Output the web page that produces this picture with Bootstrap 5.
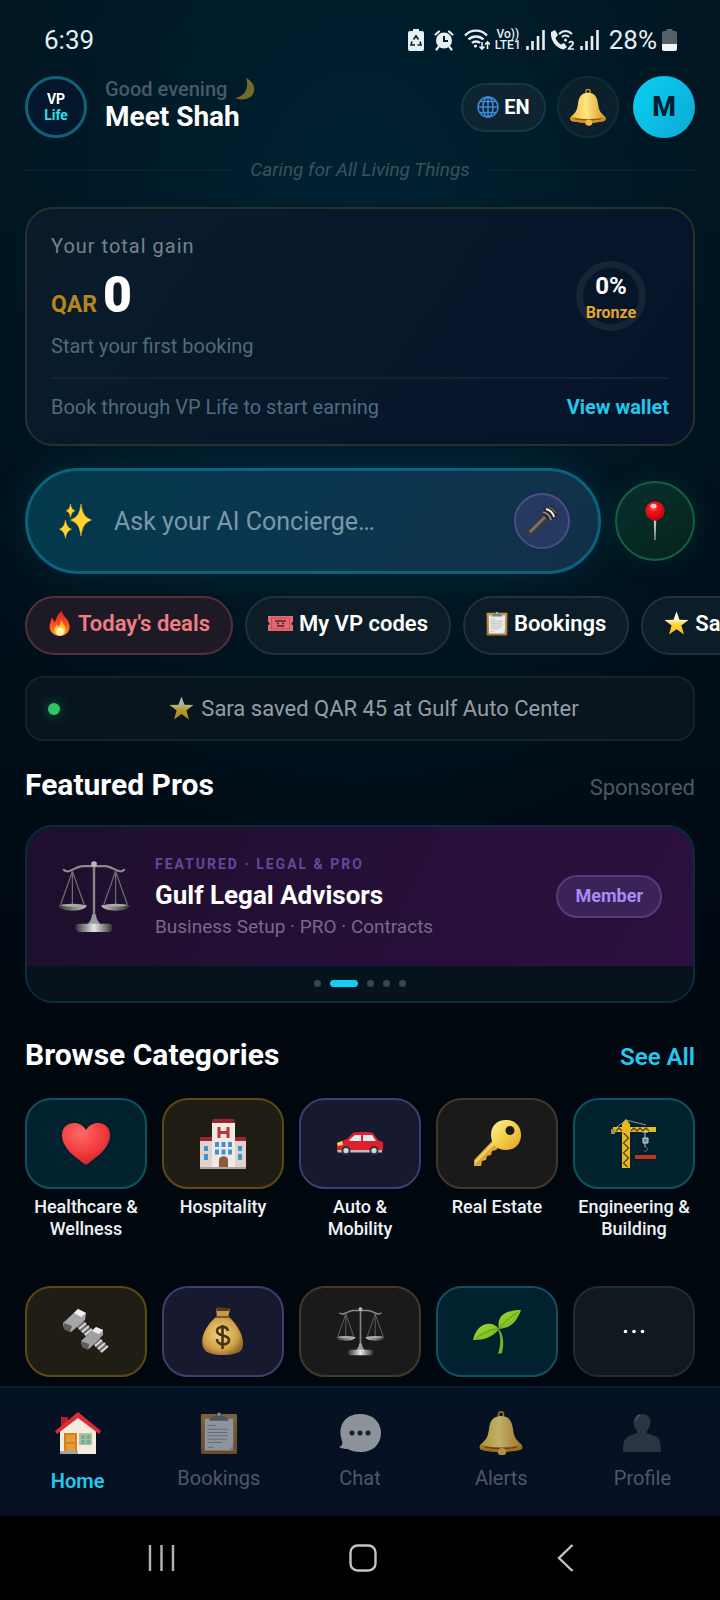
<!DOCTYPE html>
<html lang="en">
<head>
<meta charset="utf-8">
<meta name="viewport" content="width=device-width, initial-scale=1">
<title>VP Life</title>
<link rel="stylesheet" href="https://cdn.jsdelivr.net/npm/bootstrap@5.3.0/dist/css/bootstrap.min.css">
<style>
  :root { --cy: #22c8ee; }
  body {
    font-family: Roboto, "Noto Sans", sans-serif; color: #fff; font-size: 20px; line-height: 26px;
    background: radial-gradient(ellipse 62% 40% at 50% 15%, rgba(0,48,72,.5), rgba(0,30,46,0) 100%),
      linear-gradient(180deg, #00141f 0, #00101a 38%, #01070f 66%, #01070f 100%);
    overflow-x: hidden;
  }
  a { text-decoration: none; color: inherit; }
  button { color: inherit; padding: 0; }
  svg { flex: none; display: block; }
  .gutter { padding-left: 25px; padding-right: 25px; }
  .statusbar { height: 76px; padding: 4px 43px 0 44px; font-size: 26px; line-height: 30px; color: #e6eef2; }
  .g10 { gap: 10px; }
  .g5 { gap: 5px; }
  .g7 { gap: 7px; }
  .volte { font-size: 12px; line-height: 11px; font-weight: 500; }
  .round { width: 62px; height: 62px; border-radius: 50%; }
  .brand { border: 3px solid #12617b; background: #04162c; font-size: 14px; line-height: 16px; font-weight: 700; }
  .brand span:last-child { color: #28dfe9; }
  .greetbox { margin-left: 18px; }
  .greet { font-weight: 500; font-size: 20px; color: #475a66; gap: 8px; }
  .who { font-weight: 700; font-size: 28px; line-height: 29px; }
  .lang { width: 85px; height: 49px; border-radius: 25px; border: 2px solid #12394a; background: #0e2431; font-size: 20px; font-weight: 700; gap: 5px; }
  .bellbtn { margin: 0 14px 0 11px; border: 2px solid #102c37; background: #0c202b; }
  .avatar { background: linear-gradient(125deg, #08d1f3, #10a8d3); font-weight: 800; font-size: 27px; color: #03202f; border: 0; }
  .tagline { margin-top: 20px; gap: 17px; font-style: italic; font-size: 19px; line-height: 24px; color: #3d515c; }
  .tagline i { height: 2px; background: #06222f; }
  .gain { margin-top: 25px; padding: 24px; border: 2px solid #293029; border-radius: 28px; background: linear-gradient(125deg, #0a1c2a, #06132a); }
  .gain .lead1 { letter-spacing: 1px; font-size: 20px; color: #74838f; }
  .amount { height: 54px; margin: 9px 0 11px; display: flex; align-items: baseline; gap: 6px; font-size: 50px; line-height: 54px; font-weight: 900; }
  .amount small { font-size: 23px; line-height: 26px; font-weight: 700; color: #b48718; }
  .mutedblue { color: #4f6c7d; }
  .gainfoot { margin-top: 18px; padding-top: 15px; border-top: 2px solid #13232f; }
  .cyan { color: var(--cy); }
  .ring { width: 70px; margin-right: 23px; }
  .ring div { padding-top: 6px; }
  .ring b { font-size: 24px; line-height: 28px; }
  .ring em { font-style: normal; font-weight: 700; font-size: 16px; color: #e2a52a; }
  .askrow { gap: 14px; margin-top: 22px; }
  .ask { height: 106px; border-radius: 53px; border: 3px solid #0b627d; padding: 0 28px 0 31px; background: linear-gradient(120deg, #03394a 0, #0a3650 45%, #123048 100%); box-shadow: 0 0 36px rgba(0,110,140,.22); }
  .ask input { margin-left: 21px; background: none; border: 0; outline: 0; color: #dfe9ef; font-size: 25px; min-width: 0; padding: 2px 0 0; }
  .ask input::placeholder { color: #7b98a8; opacity: 1; }
  .mic { width: 56px; height: 56px; border-radius: 50%; border: 2px solid #4b4d88; background: #263a61; }
  .pin { width: 80px; height: 80px; border-radius: 50%; border: 2px solid #14613f; background: linear-gradient(150deg, #07302a, #06231f); box-shadow: 0 0 24px rgba(0,90,80,.25); }
  .chips { gap: 12px; overflow: hidden; margin-top: 22px; padding-left: 25px; }
  .chip { height: 59px; flex: none; border-radius: 30px; border: 2px solid #22313b; background: #0d1d27; padding: 0 21px 4px; gap: 6px; font-weight: 600; font-size: 22px; white-space: nowrap; }
  .chip.hot { border-color: #54303a; background: #1e1a25; color: #f07f85; }
  .ticker { margin-top: 21px; height: 65px; border: 2px solid #14222b; border-radius: 18px; background: #08151f; padding: 0 5px 0 21px; font-size: 22px; color: #949ea5; }
  .live { width: 12px; height: 12px; border-radius: 50%; background: #2cc765; box-shadow: 0 0 12px rgba(34,197,94,.5); }
  h2 { font-size: 30px; line-height: 34px; font-weight: 700; margin: 0; }
  .sect { margin-top: 27px; }
  .sect2 { margin-top: 35px; }
  .sponsor { font-size: 22px; color: #4d5860; }
  .seeall { font-size: 24px; font-weight: 600; }
  .promo { margin-top: 23px; border: 2px solid #0a2d39; border-radius: 28px; overflow: hidden; background: #06131d; }
  .slide { height: 139px; background: linear-gradient(115deg, #1d0f2d, #2d1041); padding: 0 31px; }
  .slidetext { margin-left: 25px; }
  .eyebrow { font-size: 14px; line-height: 20px; font-weight: 700; letter-spacing: 2px; color: #64479a; }
  .slide h3 { font-size: 26px; line-height: 34px; font-weight: 700; margin: 4px 0 2px; }
  .slide p { font-size: 19px; line-height: 26px; color: #79698a; margin: 0; }
  .member { height: 43px; border-radius: 22px; border: 2px solid #573b79; background: #3b2257; color: #a98bf5; font-weight: 700; font-size: 18px; padding: 0 17px 2px; }
  .dots { height: 35px; gap: 9px; }
  .dots i { width: 7px; height: 7px; border-radius: 4px; background: #364550; }
  .dots .on { width: 28px; background: #12cdf6; }
  .cats { display: grid; grid-template-columns: repeat(5, 1fr); gap: 46px 15px; margin-top: 26px; }
  .cats a { text-align: center; font-size: 18px; line-height: 22px; font-weight: 500; color: #f0f3f5; }
  .tile { height: 91px; border-radius: 26px; border: 2px solid; margin-bottom: 7px; display: flex; align-items: center; justify-content: center; }
  .t-cy { background: #02212f; border-color: #0c5361; }
  .t-go { background: #201e14; border-color: #5c4a10; }
  .t-pu { background: #171a2f; border-color: #3f3d6d; }
  .t-br { background: #1a1a1a; border-color: #453729; }
  .t-gy { background: #111820; border-color: #222a32; }
  .tabs { margin-top: 1px; height: 130px; border-top: 2px solid #04202f; background: linear-gradient(180deg, #051223, #061023); padding: 23px 7px 0; }
  .tabs a { flex: 1 1 0; display: flex; flex-direction: column; align-items: center; gap: 11px; font-size: 20px; line-height: 24px; color: #4b586a; }
  .tabs .on { color: var(--cy); font-weight: 600; gap: 14px; }
  .tabs .dim { opacity: .6; }
  .sys { height: 84px; background: #000; padding: 0 54px 0 60px; }
  .sys button { flex: 1 1 0; display: flex; justify-content: center; }
</style>
</head>
<body>
<svg width="0" height="0" class="position-absolute" aria-hidden="true">
  <defs>
    <linearGradient id="gGold" x1="0" x2="1"><stop offset="0" stop-color="#eeb93b"/><stop offset=".45" stop-color="#ffe680"/><stop offset="1" stop-color="#d9942a"/></linearGradient>
    <linearGradient id="gKey" x1="0" y1="0" x2="1" y2="1"><stop offset="0" stop-color="#fff0a0"/><stop offset=".5" stop-color="#f5cf47"/><stop offset="1" stop-color="#dba029"/></linearGradient>
    <linearGradient id="gStar" x1="0" y1="0" x2="0" y2="1"><stop offset="0" stop-color="#fff"/><stop offset=".4" stop-color="#fff0b8"/><stop offset=".55" stop-color="#fdd835"/><stop offset="1" stop-color="#f9b825"/></linearGradient>
    <linearGradient id="gFire" x1="0" y1="0" x2="0" y2="1"><stop offset="0" stop-color="#c8261c"/><stop offset=".5" stop-color="#ff4b1f"/><stop offset="1" stop-color="#ff9c2b"/></linearGradient>
    <radialGradient id="gHeart" cx=".4" cy=".25" r=".8"><stop offset="0" stop-color="#ff6a66"/><stop offset=".6" stop-color="#f23a3c"/><stop offset="1" stop-color="#c3222b"/></radialGradient>
    <radialGradient id="gRed" cx=".42" cy=".3" r=".7"><stop offset="0" stop-color="#ff8a80"/><stop offset=".35" stop-color="#f5121c"/><stop offset="1" stop-color="#b80410"/></radialGradient>
    <radialGradient id="gBag" cx=".45" cy=".45" r=".6"><stop offset="0" stop-color="#f3d883"/><stop offset=".7" stop-color="#cfa048"/><stop offset="1" stop-color="#94672a"/></radialGradient>
    <linearGradient id="gLeaf" x1="0" y1="0" x2="1" y2="1"><stop offset="0" stop-color="#b5ec3c"/><stop offset="1" stop-color="#5ba614"/></linearGradient>
    <linearGradient id="gMetal" x1="0" x2="1"><stop offset="0" stop-color="#333"/><stop offset=".5" stop-color="#e6e6e6"/><stop offset="1" stop-color="#333"/></linearGradient>
    <linearGradient id="gBoard" x1="0" y1="0" x2="0" y2="1"><stop offset="0" stop-color="#c99848"/><stop offset="1" stop-color="#a8752f"/></linearGradient>

    <symbol id="bell" viewBox="0 0 48 48"><circle cx="24" cy="5.500" r="2.600" fill="none" stroke="#c88a24" stroke-width="1.600"/><circle cx="25" cy="42" r="4.500" fill="#dfa233"/><path d="M24 7c8 0 11 5 12 13 1 8 3 11 8 15 2 2 2 5-1 6-10 2-28 2-38 0-3-1-3-4-1-6 5-4 7-7 8-15 1-8 4-13 12-13z" fill="url(#gGold)"/><path d="M4.500 36c11 3 28 3 39 0l1.500 3c-3 3-12 4-21 4S6 42 3 39z" fill="#d08e25"/><path d="M8 38c9 2 23 2 32 0" fill="none" stroke="#7c4a12" stroke-width="1.200"/><ellipse cx="25" cy="42.500" rx="4" ry="3.500" fill="#f0ba4c"/></symbol>

    <symbol id="clip" viewBox="0 0 40 46"><rect x="1" y="3" width="38" height="42" rx="1.500" fill="url(#gBoard)"/><path d="M5 8h30v33.500H5z" fill="#e9ecee"/><path d="M30 41.500l5-6v6z" fill="#b9bfc4"/><path d="M10 10c0-3 4-5 7-5 0-5 6-5 6 0 3 0 7 2 7 5z" fill="#7c8287"/><circle cx="20" cy="3.500" r="1.500" fill="#dde1e4"/><path d="M8 15h9M8 19h22M8 22.500h21M8 26h22M8 29.500h20M8 33h15M8 38h6" stroke="#a3a9af" stroke-width="1.100"/></symbol>

    <symbol id="star" viewBox="0 0 24 24"><path d="M12 .5l2.900 8 8.600.200-6.800 5.300 2.500 8.500L12 17.400 4.800 22.500 7.300 14 .5 8.700l8.600-.2z" fill="url(#gStar)"/></symbol>

    <symbol id="scales" viewBox="0 0 70 70"><path d="M5 8c5 6 12-3 19-3h22c7 0 14 9 19 3" fill="none" stroke="#8c8c8c" stroke-width="2"/><path d="M35 4v50" stroke="#858585" stroke-width="2.400"/><circle cx="35" cy="3" r="2.800" fill="#bbb"/><path d="M14 10L2 44M14 10v32M14 10l12 34M56 10L44 44M56 10v32M56 10l12 34" stroke="#6d6d6d" stroke-width="1.200"/><path d="M0 43h28c-1 7-27 7-28 0zM42 43h28c-1 7-27 7-28 0z" fill="url(#gMetal)"/><ellipse cx="14" cy="43" rx="11" ry="1.500" fill="#aaa"/><ellipse cx="56" cy="43" rx="11" ry="1.500" fill="#aaa"/><path d="M33 52h4c0 4 2 7 5 10H28c3-3 5-6 5-10z" fill="#999"/><rect x="17" y="61" width="36" height="8" rx="4" fill="url(#gMetal)"/></symbol>
  </defs>
</svg>

<div class="min-vh-100 d-flex flex-column">
  <div class="statusbar d-flex align-items-center justify-content-between">
    <span>6:39</span>
    <div class="d-flex align-items-center g10">
      <svg width="16" height="22" viewBox="0 0 16 22"><path d="M5 0h6v2h3a2 2 0 0 1 2 2v16a2 2 0 0 1-2 2H2a2 2 0 0 1-2-2V4a2 2 0 0 1 2-2h3z" fill="#e8eff2"/><path d="M5.500 10.500L8 7l2.500 3.500M12 12.500l1 3.500H9.500M4 12.500L3 16h4" fill="none" stroke="#08202d" stroke-width="1.600"/></svg>
      <svg width="20" height="22" viewBox="0 0 20 22"><circle cx="10" cy="11.500" r="8" fill="#e8eff2"/><path d="M4.500 18L2.500 20.500M15.500 18l2 2.500M1.500 5.500L5 2.500M18.500 5.500L15 2.500" stroke="#e8eff2" stroke-width="2.200" stroke-linecap="round"/><path d="M10 7v5h4" fill="none" stroke="#08202d" stroke-width="2"/></svg>
      <div class="d-flex align-items-center g5">
        <svg width="26" height="22" viewBox="0 0 26 22"><path d="M1 6.500c6-6.500 16-6.500 22 0M4.500 10.500c4-4 11-4 15 0M8 14c2-2 6-2 8 0" fill="none" stroke="#e8eff2" stroke-width="2.400"/><circle cx="11.500" cy="17" r="1.600" fill="#e8eff2"/><path d="M18 13v7m-2.500-2.500L18 20l2.500-2.500M23.500 20v-7M21 15.500l2.500-2.500 2.500 2.500" fill="none" stroke="#e8eff2" stroke-width="1.600"/></svg>
        <div class="volte text-center">Vo))<br>LTE1</div>
        <svg width="19" height="20" viewBox="0 0 19 20"><path d="M1.500 16v4M6.500 11v9M12 6v14M17.500 0v20" stroke="#e8eff2" stroke-width="2.600"/></svg>
        <svg width="25" height="22" viewBox="0 0 25 22"><path d="M1 3l4-2 3 5-2.500 3c1 3 3 5 5.500 6.500l3-1.500 3 4-3 2.500C7 20 0 12 1 3z" fill="#e8eff2"/><path d="M9 5c4-4 9-4 13 0M12 8c2-2 5-2 7 0" fill="none" stroke="#e8eff2" stroke-width="2"/><circle cx="15.500" cy="11" r="1.500" fill="#e8eff2"/><path d="M19 14c1-2.500 5-1.500 4 1-.500 1.500-4 3.500-4.500 5H24" fill="none" stroke="#e8eff2" stroke-width="1.700"/></svg>
        <svg width="19" height="20" viewBox="0 0 19 20"><path d="M1.500 16v4M6.500 11v9M12 6v14M17.500 0v20" stroke="#e8eff2" stroke-width="2.600"/></svg>
      </div>
      <div class="d-flex align-items-center g5"><span>28%</span>
        <svg width="15" height="22" viewBox="0 0 15 22"><path d="M4.500 0h6v2H13a2 2 0 0 1 2 2v11H0V4a2 2 0 0 1 2-2h2.500z" fill="#566069"/><path d="M0 15h15v5a2 2 0 0 1-2 2H2a2 2 0 0 1-2-2z" fill="#f3f6f7"/></svg></div>
    </div>
  </div>

  <header class="gutter d-flex align-items-start">
    <div class="round brand d-flex flex-column align-items-center justify-content-center"><span>VP</span><span>Life</span></div>
    <div class="greetbox flex-grow-1">
      <div class="greet d-flex align-items-center">Good evening
        <svg width="20" height="22" viewBox="0 0 20 22"><path d="M11 0c11 5 11 18 0 21-5 1-9 0-11-1 8-1 15-8 11-20z" fill="#72692b"/></svg></div>
      <div class="who">Meet Shah</div>
    </div>
    <div class="d-flex align-items-center">
      <button class="lang d-flex align-items-center justify-content-center">
        <svg width="22" height="22" viewBox="0 0 22 22" fill="none" stroke="#3d8bd6" stroke-width="1.500"><circle cx="11" cy="11" r="10"/><ellipse cx="11" cy="11" rx="5" ry="10"/><path d="M11 1v20M1 11h20M3 5.500h16M3 16.500h16"/></svg>EN</button>
      <button class="round bellbtn d-flex align-items-center justify-content-center" aria-label="Notifications"><svg width="40" height="40"><use href="#bell"/></svg></button>
      <button class="round avatar">M</button>
    </div>
  </header>

  <div class="gutter"><div class="tagline d-flex align-items-center"><i class="flex-grow-1"></i><span>Caring for All Living Things</span><i class="flex-grow-1"></i></div></div>

  <main class="flex-grow-1">
    <section class="gutter">
      <div class="gain">
        <div class="d-flex align-items-center justify-content-between">
          <div>
            <div class="lead1">Your total gain</div>
            <div class="amount"><small>QAR</small><span>0</span></div>
            <div class="mutedblue">Start your first booking</div>
          </div>
          <div class="ring position-relative">
            <svg width="70" height="70" viewBox="0 0 70 70"><circle cx="35" cy="35" r="31.500" fill="none" stroke="#162436" stroke-width="7"/></svg>
            <div class="position-absolute top-0 start-50 translate-middle-x h-100 d-flex flex-column align-items-center justify-content-center"><b>0%</b><em>Bronze</em></div>
          </div>
        </div>
        <div class="gainfoot d-flex justify-content-between"><span class="mutedblue">Book through VP Life to start earning</span><a href="#" class="cyan fw-bold">View wallet</a></div>
      </div>

      <div class="askrow d-flex align-items-center">
        <div class="ask flex-grow-1 d-flex align-items-center">
          <svg width="34" height="36" viewBox="0 0 34 36" fill="#fdd42e" stroke="#f6b921" stroke-width=".5"><path d="M22 1c1.500 9 3 13 10.500 16C25 20 23.500 24 22 33c-1.500-9-3-13-10.500-16C19 14 20.500 10 22 1zM11.500 1c.8 4 1.500 5.500 4.500 6.800-3 1.200-3.700 2.700-4.500 6.700-.8-4-1.500-5.500-4.500-6.700 3-1.300 3.700-2.800 4.500-6.800zM6.500 17c1 5 2 7.500 6 9.200-4 1.600-5 4.100-6 9.100-1-5-2-7.500-6-9.100 4-1.700 5-4.200 6-9.200z"/></svg>
          <input type="text" class="flex-grow-1" placeholder="Ask your AI Concierge…" aria-label="Ask your AI Concierge">
          <button class="mic d-flex align-items-center justify-content-center" aria-label="Speak">
            <svg width="32" height="32" viewBox="0 0 32 32"><path d="M1 26L17 9l7 6L5 31c-3 1-6-3-4-5z" fill="#3d3b39"/><path d="M3 26L18 11l2 2L5 28z" fill="#77736e"/><path d="M17 9c-1-4 3-8 8-8 4 0 7 4 6 8s-5 6-8 6z" fill="#25262a"/><path d="M17 7c4 1 7 4 8 8" fill="none" stroke="#9c9a96" stroke-width="1.600"/><path d="M20 4c4 1 7 4 8 8" fill="none" stroke="#f1eee8" stroke-width="2"/><path d="M23 2c3 1 6 4 7 6" fill="none" stroke="#6f7078" stroke-width="1.200"/></svg></button>
        </div>
        <button class="pin d-flex align-items-center justify-content-center" aria-label="Location"><svg width="20" height="40" viewBox="0 0 20 40"><path d="M8.700 18h2.600l-.8 21h-1z" fill="#b9bec0"/><circle cx="10" cy="10" r="9.700" fill="url(#gRed)"/><ellipse cx="8.500" cy="5" rx="3" ry="2" fill="#ffd0ca"/></svg></button>
      </div>
    </section>

    <nav class="chips d-flex" aria-label="Shortcuts">
      <button class="chip hot d-flex align-items-center"><svg width="24" height="25" viewBox="0 0 24 26"><path d="M14 0c1 5 4 6 6 10 5 8 0 16-8 16S-1 19 2 12c.500-1.500 1-3 1-5 2 1 3 3 3 5C9 9 8 3 14 0z" fill="url(#gFire)"/><path d="M13 9c1 4 5 5 5 10 0 4-3 6.500-6 6.500S5.500 23 6 19c.3-2.500 2-3 2.500-5 1 .5 1.500 1.500 1.500 3 2-2 3-4 3-8z" fill="#ffc83d"/><ellipse cx="12" cy="21.500" rx="4" ry="4" fill="#fff3b0"/></svg>Today's deals</button>
      <button class="chip d-flex align-items-center"><svg width="25" height="15" viewBox="0 0 25 15"><path d="M0 0h25v6a1.500 1.500 0 0 0 0 3v6H0V9a1.500 1.500 0 0 0 0-3z" fill="#e36a73"/><rect x="3.500" y="2" width="18" height="11" fill="none" stroke="#c84d59"/><path d="M7 5h11M9 7.500h2m3 0h2M9 10h7" stroke="#51232d" stroke-width="1.500"/></svg>My VP codes</button>
      <button class="chip d-flex align-items-center"><svg width="22" height="25"><use href="#clip"/></svg>Bookings</button>
      <button class="chip d-flex align-items-center"><svg width="25" height="25"><use href="#star"/></svg>Saved</button>
    </nav>

    <section class="gutter">
      <div class="ticker d-flex align-items-center"><i class="live"></i><div class="flex-grow-1 d-flex justify-content-center align-items-center g7"><svg width="25" height="25" opacity=".7"><use href="#star"/></svg>Sara saved QAR 45 at Gulf Auto Center</div></div>

      <div class="sect d-flex justify-content-between align-items-baseline"><h2>Featured Pros</h2><span class="sponsor">Sponsored</span></div>
      <div class="promo">
        <div class="slide d-flex align-items-center">
          <svg width="72" height="72"><use href="#scales"/></svg>
          <div class="slidetext flex-grow-1">
            <div class="eyebrow">FEATURED · LEGAL &amp; PRO</div>
            <h3>Gulf Legal Advisors</h3>
            <p>Business Setup · PRO · Contracts</p>
          </div>
          <button class="member">Member</button>
        </div>
        <div class="dots d-flex align-items-center justify-content-center"><i></i><i class="on"></i><i></i><i></i><i></i></div>
      </div>

      <div class="sect2 d-flex justify-content-between align-items-baseline"><h2>Browse Categories</h2><a href="#" class="cyan seeall">See All</a></div>

      <div class="cats">
        <a href="#"><span class="tile t-cy"><svg width="50" height="44" viewBox="0 0 50 44"><path d="M25 43C14 35 1 26 1 13 1-1 19-3 25 8 31-3 49-1 49 13c0 13-13 22-24 30z" fill="url(#gHeart)"/></svg></span>Healthcare &amp;<br>Wellness</a>
        <a href="#"><span class="tile t-go"><svg width="46" height="50" viewBox="0 0 46 50"><path d="M0 20h12v29H0zM34 20h12v29H34z" fill="#dfd3cb"/><path d="M12 3h23v46H12z" fill="#f2e9e2"/><path d="M13 0h21l1 4H12zM0 18h12v4H0zM35 18h11v4H35z" fill="#9c2330"/><path d="M19 8v11M28 8v11M19 13.500h9" stroke="#b3373d" stroke-width="3"/><path d="M15 23h4v5h-4zM21.500 23h4v5h-4zM28 23h4v5h-4zM15 30.500h4v5h-4zM21.500 30.500h4v5h-4zM28 30.500h4v5h-4zM4 27h4v5H4zM4 35h4v6H4zM38 27h4v5h-4zM38 35h4v6h-4z" fill="#3c93cf"/><path d="M19 48v-7c0-5 9-5 9 0v7z" fill="#8d5a40"/><path d="M0 48h46v2H0z" fill="#a6a6a2"/></svg></span>Hospitality</a>
        <a href="#"><span class="tile t-pu"><svg width="48" height="24" viewBox="0 0 48 24"><path d="M1 11l10-4 6-6c4-1.500 16-1.500 20 0l5 7 5 2v8l-2 2H2l-1-3z" fill="#df1f29"/><path d="M13 8l6-5h6v6H14zM27 3h9l4 6H27z" fill="#dcecf4"/><path d="M1 18h45v2.500H2z" fill="#b9bcc2"/><path d="M1 11l5-2 1 4-5 1z" fill="#f4df5a"/><circle cx="10" cy="18.500" r="4.500" fill="#33363b"/><circle cx="10" cy="18.500" r="2.600" fill="#d5d8db"/><circle cx="38" cy="18.500" r="4.500" fill="#33363b"/><circle cx="38" cy="18.500" r="2.600" fill="#d5d8db"/></svg></span>Auto &amp;<br>Mobility</a>
        <a href="#"><span class="tile t-br"><svg width="49" height="49" viewBox="0 0 49 49"><path d="M21 20L1 41v6h7l1-5 4-1 1-4 4-1 1-4 4-1 5-5z" fill="#dca73a"/><path d="M20 23L2 42v3l20-20z" fill="#f6d369"/><path d="M33 1c9 0 15 6 15 15s-6 15-15 15-15-6-15-15S24 1 33 1zm4 6a4.500 4.500 0 1 0 0 9 4.500 4.500 0 0 0 0-9z" fill="url(#gKey)" fill-rule="evenodd"/></svg></span>Real Estate</a>
        <a href="#"><span class="tile t-cy"><svg width="46" height="50" viewBox="0 0 46 50"><path d="M2 11L15 1l20 5" fill="none" stroke="#8f9a9c"/><path d="M11 5l4-5 4 5v44h-8zM2 8h43v5H2z" fill="#e8b925"/><path d="M0 10h4v5H0z" fill="#9a8f60"/><path d="M12.500 14l5 5-5 5 5 5-5 5 5 5-5 5 4 4M5 12l3-3 3 3M20 12l3-3 3 3 3-3 3 3 3-3 3 3" fill="none" stroke="#54430b" stroke-width="1.300"/><path d="M34 13v15" stroke="#bfc6c9"/><path d="M31 13h6M32 19h5v5h-5z" stroke="#cfd5d8" fill="#78868c"/><path d="M34 28c4 0 3 5-1 4" fill="none" stroke="#6a7478"/><path d="M24 36h21v4H24z" fill="#c33120"/></svg></span>Engineering &amp;<br>Building</a>
        <a href="#" aria-label="Hardware"><span class="tile t-go"><svg width="48" height="48" viewBox="0 0 48 48"><path d="M17 15L43 42" stroke="#6f6f6f" stroke-width="9"/><path d="M17 21l7-6M20 24l7-6M23 27l7-6M33 38l7-6M36 41l7-6M39 44l7-6" stroke="#dedede" stroke-width="1.700"/><path d="M1 15L16 1l8 4-1 7L9 24l-7-3z" fill="#a7a7a7"/><path d="M16 1l8 4-5 4-7-4z" fill="#eee"/><path d="M2 15l8 3-2 6-6-3z" fill="#5e5e5e"/><path d="M19 33l15-14 7 3v5L27 41l-7-3z" fill="#a0a0a0"/><path d="M34 19l7 3-4 4-7-3z" fill="#eee"/><path d="M19 33l8 3-1 6-6-3z" fill="#5e5e5e"/></svg></span></a>
        <a href="#" aria-label="Finance"><span class="tile t-pu"><svg width="42" height="49" viewBox="0 0 42 49"><path d="M14 10C3 19-3 33 2 42c4 8 34 8 38 0 4-9-3-23-13-32z" fill="url(#gBag)"/><path d="M14 1c4 2 10 0 14 1l-2 9H15z" fill="#c49a4c"/><path d="M14 1c4-2 10 1 14 0l-1 3H15z" fill="#54391a"/><path d="M14 10h13" stroke="#7d5426" stroke-width="2"/><path d="M26 24c-1-6-11-5-11 0 0 6 12 3 12 9 0 6-12 6-12-1M20.500 18v24" fill="none" stroke="#49330f" stroke-width="2.600"/></svg></span></a>
        <a href="#" aria-label="Legal"><span class="tile t-br"><svg width="49" height="49"><use href="#scales"/></svg></span></a>
        <a href="#" aria-label="Garden"><span class="tile t-cy"><svg width="50" height="46" viewBox="0 0 50 46"><path d="M27 20c5 7 5 15 3 24l-4 1c3-10 3-18 0-24z" fill="#74b42b"/><path d="M27 20C24 7 34 1 49 1c-4 11-9 18-22 19zM27 20C20 11 5 13 1 31c12 0 20-3 26-11z" fill="url(#gLeaf)"/><path d="M27 20C33 12 40 7 46 3M26 20C19 20 10 25 4 29" fill="none" stroke="#59991d" stroke-width="1"/></svg></span></a>
        <a href="#" aria-label="More"><span class="tile t-gy"><svg width="22" height="5" viewBox="0 0 22 5" fill="#fff"><circle cx="2.500" cy="2.500" r="1.800"/><circle cx="11" cy="2.500" r="1.800"/><circle cx="19.500" cy="2.500" r="1.800"/></svg></span></a>
      </div>
    </section>
  </main>

  <nav class="tabs d-flex" aria-label="Main">
    <a href="#" class="on"><svg width="48" height="44" viewBox="0 0 48 44"><path d="M7 6h7v10H7z" fill="#b91d2b"/><path d="M6 19L24 4l18 15v24H6z" fill="#f3ecdf"/><path d="M24 1l23 19-2 3L24 7 3 23l-2-3z" fill="#dc2b3b"/><path d="M10 22h13v19H10z" fill="#cf821f"/><path d="M12 24h9v7h-9zM12 33h9v7h-9z" fill="#e39c38"/><path d="M25 22h13v12H25z" fill="#c9b88e"/><path d="M27 24h4v4h-4zM32.500 24h4v4h-4zM27 29h4v4h-4zM32.500 29h4v4h-4z" fill="#59b7ae"/><path d="M6 40h18v3H6z" fill="#9fa4a8"/></svg>Home</a>
    <a href="#"><svg class="dim" width="38" height="44"><use href="#clip"/></svg>Bookings</a>
    <a href="#"><svg width="44" height="44" viewBox="0 0 44 44"><path d="M22 3c13 0 21 8 21 19s-8 19-20 19c-6 0-10-1-13-3-2 0-5 0-9-2 3-1 4-3 3-6C-1 16 6 3 22 3z" fill="#8d929b"/><g fill="#15202c"><circle cx="14" cy="22" r="2.500"/><circle cx="22" cy="22" r="2.500"/><circle cx="30" cy="22" r="2.500"/></g></svg>Chat</a>
    <a href="#"><svg width="46" height="44" opacity=".75" viewBox="1 2 46 44"><use href="#bell" width="48" height="48"/></svg>Alerts</a>
    <a href="#"><svg width="40" height="44" viewBox="0 0 40 44"><path d="M1 41c0-12 2-15 9-17l5-2c1-1 0-2-1-3-5-9-2-16 6-16s11 7 6 16c-1 1-2 2-1 3l5 2c7 2 9 5 9 17z" fill="#2b3441"/><path d="M14 10c0-3 2-5 4-6" fill="none" stroke="#4b5460" stroke-width="1.400"/></svg>Profile</a>
  </nav>
  <div class="sys d-flex align-items-center" role="toolbar" aria-label="System navigation">
    <button class="bg-transparent border-0" aria-label="Recents"><svg width="27" height="28" viewBox="0 0 27 28"><path d="M2 1v26M13.500 1v26M25 1v26" stroke="#b4b4b4" stroke-width="2.400"/></svg></button>
    <button class="bg-transparent border-0" aria-label="Home"><svg width="28" height="28" viewBox="0 0 28 28"><rect x="1.500" y="1.500" width="25" height="25" rx="7" fill="none" stroke="#c4c4c4" stroke-width="2.400"/></svg></button>
    <button class="bg-transparent border-0" aria-label="Back"><svg width="17" height="28" viewBox="0 0 17 28"><path d="M15.500 1L2 14l13.500 13" fill="none" stroke="#c4c4c4" stroke-width="2.400"/></svg></button>
  </div>
</div>
<script src="https://cdn.jsdelivr.net/npm/bootstrap@5.3.0/dist/js/bootstrap.bundle.min.js"></script>
</body>
</html>
